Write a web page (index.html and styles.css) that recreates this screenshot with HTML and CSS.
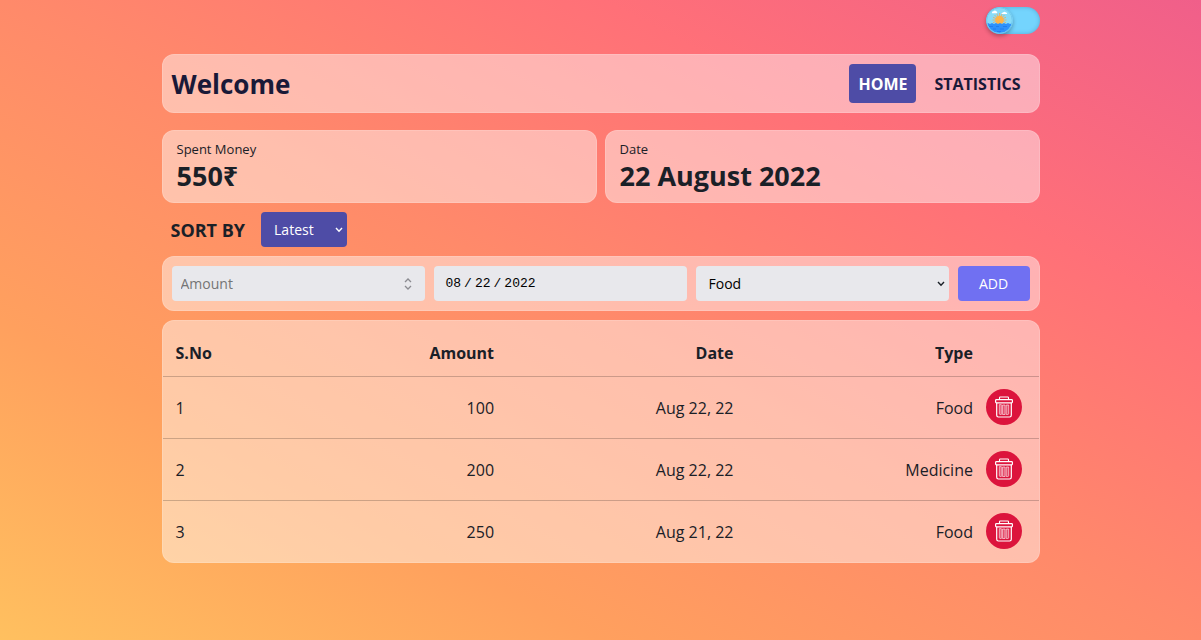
FILE: index.html
```html
<!DOCTYPE html>
<html lang="en">
<head>
<meta charset="utf-8">
<meta name="viewport" content="width=device-width, initial-scale=1">
<title>Expense Tracker</title>
<link rel="stylesheet" href="styles.css">
</head>
<body>
<svg class="sprite" aria-hidden="true">
  <symbol id="chevron" viewBox="0 0 8 6"><path d="M1 1L4 4.200L7 1" fill="none" stroke="currentColor" stroke-width="1.400"/></symbol>
  <symbol id="trash" viewBox="0 0 20 22">
    <g fill="none" stroke="#fff" stroke-linejoin="round" stroke-linecap="round">
      <path d="M5.500 3.500V1.800Q5.500 1 6.300 1H13.700Q14.500 1 14.500 1.800V3.500" stroke-width="1.100"/>
      <rect x="1.600" y="3.600" width="16.800" height="3.200" rx=".8" stroke-width="1.200"/>
      <path d="M2.700 7V19.300Q2.700 21 4.400 21H15.600Q17.300 21 17.300 19.300V7" stroke-width="1.200"/>
      <path d="M5.300 9V17.500Q5.300 18.500 6.300 18.500H7.300V9ZM8.900 9H11.100V18.500H8.900ZM12.700 9H14.700V17.500Q14.700 18.500 13.700 18.500H12.700Z" stroke-width=".6" fill="#fff" fill-opacity=".25"/>
    </g>
  </symbol>
</svg>
<div class="page">
  <div class="theme">
    <label class="toggle">
      <input class="toggle-input" type="checkbox" aria-label="Dark theme">
      <svg class="toggle-knob" viewBox="0 0 27 27" aria-hidden="true">
        <defs><clipPath id="disc"><circle cx="13.500" cy="13.500" r="13"/></clipPath></defs>
        <g clip-path="url(#disc)">
          <rect width="27" height="27" fill="#88dcf8"/>
          <g stroke="#e0b070" stroke-width=".9">
            <path d="M13.500 6V20M6.500 13H20.500M8.500 8L18.500 18M18.500 8L8.500 18M10.800 6.500L16.200 19.500M16.200 6.500L10.800 19.500M7 10.300L20 15.700M20 10.300L7 15.700"/>
          </g>
          <circle cx="13.500" cy="13" r="4.300" fill="#ffb347"/>
          <path d="M0 17L2 16L4 17L6 16L8 17L10 16L12 17L14 16L16 17L18 16L20 17L22 16L24 17L27 16V27H0Z" fill="#2e91fb"/>
          <path d="M3 19.500H7M10 19.500H13M17 19.500H21M7 22H10M14 22H18M11 24.500H15" stroke="#1f78ea" stroke-width=".8"/>
          <path d="M6 6.200Q5.500 4.500 7.500 4.300Q9 2.800 10.300 4.300Q12 4.800 11 6.200ZM15.500 7Q15.300 5.700 17 5.500Q18.500 4 20 5.500Q21.700 5.700 21 7Z" fill="#fff"/>
        </g>
        <circle cx="13.500" cy="13.500" r="12.800" fill="none" stroke="#72c9ee" stroke-width="1"/>
      </svg>
    </label>
  </div>

  <header class="panel header">
    <h1 class="title">Welcome</h1>
    <nav class="nav">
      <a class="nav-link nav-link-active" href="#home">HOME</a>
      <a class="nav-link" href="#statistics">STATISTICS</a>
    </nav>
  </header>

  <main>
    <section class="cards">
      <div class="panel card"><p class="card-label">Spent Money</p><p class="card-value">550₹</p></div>
      <div class="panel card"><p class="card-label">Date</p><p class="card-value">22 August 2022</p></div>
    </section>

    <div class="sort">
      <label class="sort-label" for="sort">SORT BY</label>
      <div class="control control-sort">
        <select class="field" id="sort"><option>Latest</option><option>Oldest</option></select>
        <svg class="chevron" aria-hidden="true"><use href="#chevron"/></svg>
      </div>
    </div>

    <form class="panel entry">
      <div class="control">
        <input class="field amount" type="number" placeholder="Amount" aria-label="Amount">
        <svg class="stepper" viewBox="0 0 8 12" aria-hidden="true"><path d="M1 4L4 1L7 4M1 8L4 11L7 8" fill="none" stroke="#8b8b91" stroke-width="1.300"/></svg>
      </div>
      <input class="field date" type="date" value="2022-08-22" aria-label="Date">
      <div class="control">
        <select class="field" aria-label="Type"><option>Food</option><option>Medicine</option></select>
        <svg class="chevron" aria-hidden="true"><use href="#chevron"/></svg>
      </div>
      <button class="add" type="submit">ADD</button>
    </form>

    <div class="panel list">
      <table class="table">
        <colgroup><col class="col-number"><col><col><col><col class="col-action"></colgroup>
        <thead><tr><th>S.No</th><th>Amount</th><th>Date</th><th>Type</th><td></td></tr></thead>
        <tbody>
          <tr><td>1</td><td>100</td><td>Aug 22, 22</td><td>Food</td><td class="action"><button class="delete" type="button" aria-label="Delete"><svg class="trash"><use href="#trash"/></svg></button></td></tr>
          <tr><td>2</td><td>200</td><td>Aug 22, 22</td><td>Medicine</td><td class="action"><button class="delete" type="button" aria-label="Delete"><svg class="trash"><use href="#trash"/></svg></button></td></tr>
          <tr><td>3</td><td>250</td><td>Aug 21, 22</td><td>Food</td><td class="action"><button class="delete" type="button" aria-label="Delete"><svg class="trash"><use href="#trash"/></svg></button></td></tr>
        </tbody>
      </table>
    </div>
  </main>
</div>
</body>
</html>
```
FILE: styles.css
```css
* { box-sizing: border-box; }
body {
  margin: 0;
  min-height: 100vh;
  color: #1a2027;
  font-family: "Open Sans", "Noto Sans", sans-serif;
  font-size: 16px;
  background: linear-gradient(to right top, #ffc05f, #ffa05e 25%, #ff8a6a 50%, #ff7078 75%, #f05f8a);
}
h1, p { margin: 0; }
.sprite { position: absolute; width: 0; height: 0; }
.page { max-width: 896px; margin: 0 auto; padding: 7px 9px 9px; }
.panel {
  border: 1px solid rgba(255, 255, 255, .15);
  border-radius: 12px;
  background: rgba(255, 255, 255, .45);
}
.theme { display: flex; justify-content: flex-end; margin-bottom: 20px; }
.toggle {
  position: relative;
  display: flex;
  width: 54px;
  height: 27px;
  border-radius: 14px;
  background: #74d4fd;
  box-shadow: inset 0 0 4px rgba(0, 70, 120, .3);
}
.toggle-input { position: absolute; inset: 0; width: 100%; height: 100%; margin: 0; opacity: 0; }
.toggle-knob { width: 27px; height: 27px; border-radius: 50%; box-shadow: 0 2px 4px rgba(0, 0, 0, .3); }

.header { display: flex; align-items: center; justify-content: space-between; padding: 9px; margin-bottom: 17px; }
.title { font-size: 26px; line-height: 36px; color: #191938; }
.nav { display: flex; gap: 9px; }
.nav-link { padding: 1px 9px 0; border-radius: 4px; line-height: 38px; font-weight: 700; color: #191938; text-decoration: none; }
.nav-link-active { color: #fff; background: #4e4ca6; }

.cards { display: grid; grid-template-columns: 1fr 1fr; gap: 8px; margin-bottom: 9px; }
.card { padding: 9px 14px; }
.card-label { font-size: 13px; line-height: 18px; }
.card-value { font-size: 27px; line-height: 35px; font-weight: 700; }

.sort { display: flex; align-items: center; gap: 16px; padding-left: 9px; margin-bottom: 9px; }
.sort-label { font-size: 18px; font-weight: 700; }
.control { position: relative; }
.control-sort { width: 86px; color: #fff; }
.control-sort .field { color: #fff; background: #4e4ca6; }
.field {
  display: block;
  width: 100%;
  height: 35px;
  padding: 0 9px;
  border: 0;
  border-radius: 4px;
  background: #e8e8ec;
  color: #000;
  font: 14px "Open Sans", "Noto Sans", sans-serif;
}
select.field { appearance: none; padding: 0 13px; }
.chevron { position: absolute; right: 4px; top: 15px; width: 8px; height: 6px; pointer-events: none; }

.entry { display: grid; grid-template-columns: 1fr 1fr 1fr 72px; gap: 9px; padding: 9px; margin-bottom: 9px; }
.amount { appearance: textfield; }
.stepper { position: absolute; right: 13px; top: 12px; width: 8px; height: 12px; pointer-events: none; }
.date { padding-left: 11px; font: 13px "Liberation Mono", monospace; }
.date::-webkit-calendar-picker-indicator { display: none; }
.date::-webkit-datetime-edit-text { padding: 0 2px; }
.add { height: 35px; padding: 0; border: 0; border-radius: 4px; color: #fff; background: #7070f2; font: 14px "Open Sans", "Noto Sans", sans-serif; }

.table { width: 100%; table-layout: fixed; border-collapse: collapse; }
.col-number { width: 12%; }
.col-action { width: 6%; }
.table th, .table td { height: 62px; padding: 2px 13px 0; text-align: right; }
.table thead th, .table thead td { height: 55px; padding-top: 9px; }
.table th:first-child, .table td:first-child { text-align: left; }
.table tbody tr { border-top: 1px solid rgba(0, 0, 0, .2); }
.table .action { padding: 0; text-align: left; }
.delete { display: grid; place-items: center; width: 36px; height: 36px; padding: 0; border: 0; border-radius: 50%; background: #dc143c; }
.trash { width: 20px; height: 22px; }
```
